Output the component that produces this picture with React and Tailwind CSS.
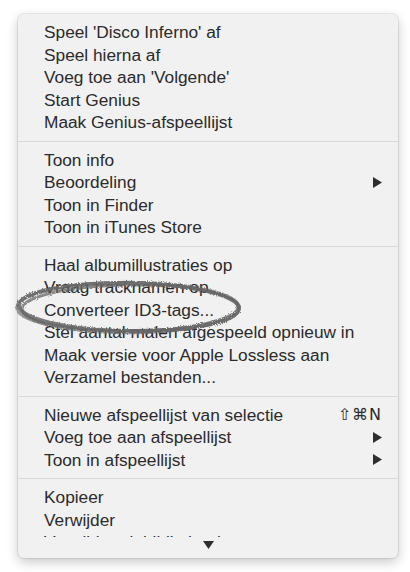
import React from "react";

const Arrow = () => (
  <svg width="9" height="11" viewBox="0 0 9 11" className="block">
    <path d="M0 0 L9 5.5 L0 11 Z" fill="#2e2e2e" />
  </svg>
);

const Item = ({ label, right }) => (
  <div className="h-[22.5px] flex items-center justify-between pl-[26px] pr-[16px] text-[17.3px] leading-[22.5px] text-[#2b2b2b] whitespace-nowrap">
    <span>{label}</span>
    {right}
  </div>
);

const Sep = () => (
  <div className="py-[7px]">
    <div className="h-px bg-[#d9d9d9]" />
  </div>
);

export default function App() {
  const s1 = [
    "Speel 'Disco Inferno' af",
    "Speel hierna af",
    "Voeg toe aan 'Volgende'",
    "Start Genius",
    "Maak Genius-afspeellijst",
  ];
  const s3 = [
    "Haal albumillustraties op",
    "Vraag tracknamen op",
    "Converteer ID3-tags...",
    "Stel aantal malen afgespeeld opnieuw in",
    "Maak versie voor Apple Lossless aan",
    "Verzamel bestanden...",
  ];
  return (
    <div className="relative w-[410px] h-[572px] bg-white pt-[14px] pl-[18px] font-['Liberation_Sans','DejaVu_Sans',sans-serif]">
      <div className="w-[380px] h-[544px] bg-[#f1f1f1] rounded-[6px] shadow-[0_0_0_1px_rgba(0,0,0,0.07),0_4px_12px_rgba(0,0,0,0.22)] flex flex-col overflow-hidden">
        <div className="flex-1 overflow-hidden pt-[7px]">
          {s1.map((t) => (
            <Item key={t} label={t} />
          ))}
          <Sep />
          <Item label="Toon info" />
          <Item label="Beoordeling" right={<Arrow />} />
          <Item label="Toon in Finder" />
          <Item label="Toon in iTunes Store" />
          <Sep />
          {s3.map((t) => (
            <Item key={t} label={t} />
          ))}
          <Sep />
          <Item
            label="Nieuwe afspeellijst van selectie"
            right={<span className="text-[16px] tracking-[1px] font-['DejaVu_Sans',sans-serif]">⇧⌘N</span>}
          />
          <Item label="Voeg toe aan afspeellijst" right={<Arrow />} />
          <Item label="Toon in afspeellijst" right={<Arrow />} />
          <Sep />
          <Item label="Kopieer" />
          <Item label="Verwijder" />
          <Item label="Verwijder uit bibliotheek" />
        </div>
        <div className="h-[21px] flex justify-center pt-[4px]">
          <svg width="11" height="8" viewBox="0 0 11 8" className="block">
            <path d="M0 0 L11 0 L5.5 8 Z" fill="#2e2e2e" />
          </svg>
        </div>
      </div>
      <svg
        className="absolute left-0 top-0 pointer-events-none"
        width="410"
        height="572"
        viewBox="0 0 410 572"
      >
        <defs>
          <filter id="rough" x="-10%" y="-30%" width="120%" height="160%">
            <feTurbulence type="fractalNoise" baseFrequency="0.8" numOctaves="2" result="n" />
            <feDisplacementMap in="SourceGraphic" in2="n" scale="3.5" />
          </filter>
        </defs>
        <g filter="url(#rough)" fill="none" stroke="#666" strokeLinecap="round">
          <ellipse cx="129" cy="307" rx="110" ry="24" strokeWidth="4" opacity="0.85" transform="rotate(0.8 129 307)" />
          <ellipse cx="130" cy="308" rx="108" ry="23" strokeWidth="3" opacity="0.75" transform="rotate(-0.6 130 308)" />
          <ellipse cx="128" cy="307.5" rx="111.5" ry="25.5" strokeWidth="2.5" opacity="0.65" />
        </g>
      </svg>
    </div>
  );
}
